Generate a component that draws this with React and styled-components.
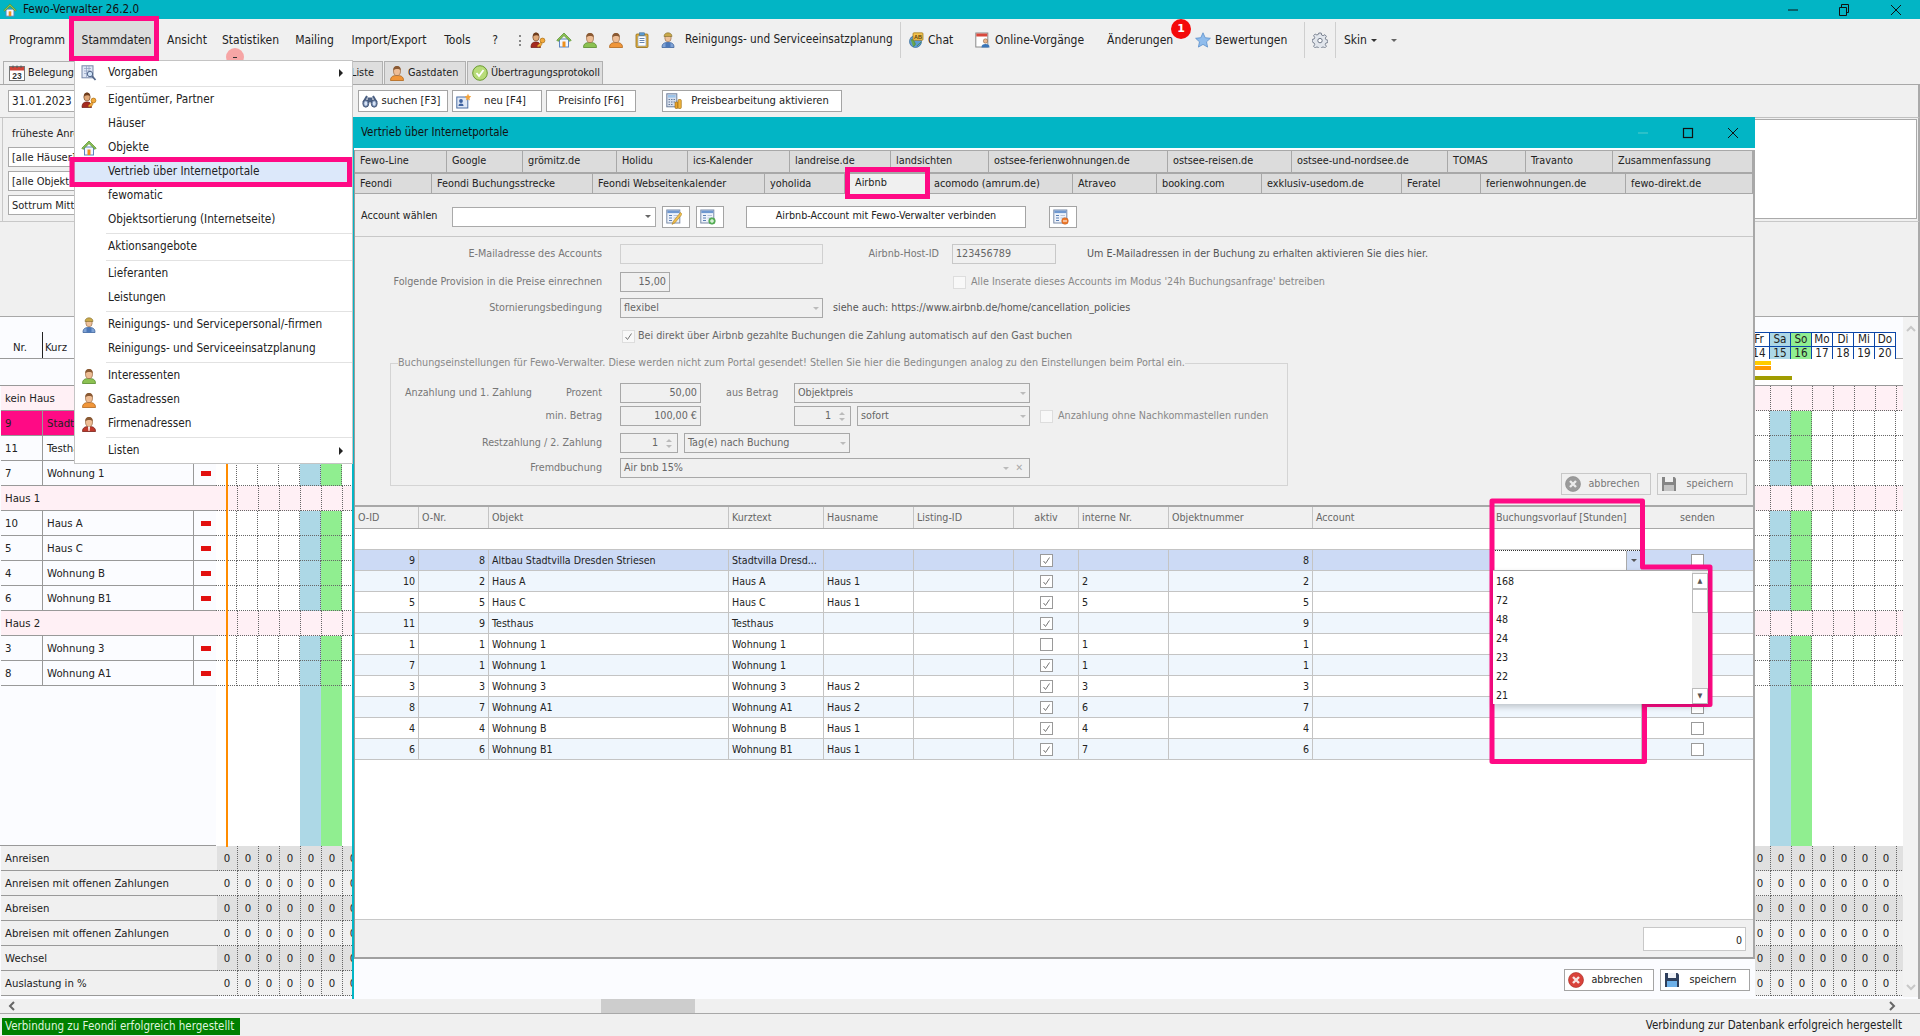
import React from 'react'
import styled, { createGlobalStyle } from 'styled-components'

const TEAL = '#02b5c5'
const PINK = '#ff0a85'
const FONT = `"DejaVu Sans Condensed", "Liberation Sans", sans-serif`

const Global = createGlobalStyle`
  html, body { margin: 0; padding: 0; width: 1920px; height: 1036px; overflow: hidden; background: #f0f0f0; }
  body { font: 12px/1 ${FONT}; color: #222; }
  * { box-sizing: border-box; }
`

const Shell = styled.div`
  position: relative;
  display: flex;
  flex-direction: column;
  width: 1920px;
  height: 1036px;
  overflow: hidden;
  background: #f0f0f0;
`

/* window chrome */

const TitleBar = styled.div`
  display: flex;
  align-items: center;
  height: 19px;
  flex: none;
  background: ${TEAL};
  color: #111;
  font-size: 11.6px;
  padding-left: 3px;
  gap: 6px;
`

const TitleText = styled.span`
  flex: 1;
  white-space: nowrap;
`

const WinButton = styled.span`
  display: flex;
  align-items: center;
  justify-content: center;
  width: ${p => p.$w || 45}px;
`

const MenuBar = styled.div`
  display: flex;
  align-items: stretch;
  height: 42px;
  flex: none;
`

const MenuEntry = styled.div`
  display: flex;
  align-items: center;
  justify-content: center;
  width: ${p => p.$w}px;
  background: ${p => (p.$open ? '#dcdcdc' : 'transparent')};
  white-space: nowrap;
`

const Grip = styled.span`
  align-self: center;
  width: 2px;
  height: 11px;
  margin: 0 4px 0 9px;
  border-left: 2px dotted #888;
`

const IconSlot = styled.span`
  display: flex;
  align-items: center;
  justify-content: center;
  width: ${p => p.$w || 26}px;
`

const ToolEntry = styled.div`
  position: relative;
  display: flex;
  align-items: center;
  gap: 4px;
  width: ${p => p.$w}px;
  padding-left: ${p => p.$pl || 0}px;
  font-size: ${p => p.$fs || 12}px;
  white-space: nowrap;
`

const BarSep = styled.span`
  align-self: center;
  width: 1px;
  height: 36px;
  background: #cfcfcf;
`

const Badge = styled.span`
  position: absolute;
  left: 82px;
  top: 0;
  width: 20px;
  height: 20px;
  border-radius: 50%;
  background: #f40a0a;
  color: #fff;
  font: bold 11px/20px "DejaVu Sans", sans-serif;
  text-align: center;
`

const FadedBadge = styled.span`
  position: absolute;
  left: 226px;
  top: 48px;
  width: 18px;
  height: 18px;
  border-radius: 50%;
  background: #f6a5a5;

  &::after {
    content: '';
    position: absolute;
    left: 7px;
    top: 9px;
    width: 4px;
    height: 1px;
    background: #333;
  }
`

const Caret = styled.span`
  display: inline-block;
  flex: none;
  width: 0;
  height: 0;
  margin-left: ${p => p.$ml || 0}px;
  border-left: 3px solid transparent;
  border-right: 3px solid transparent;
  border-top: 3px solid ${p => p.$c || '#666'};
`

const ModuleTabs = styled.div`
  display: flex;
  align-items: flex-end;
  height: 24px;
  flex: none;
  padding-left: 3px;
  font-size: 10.8px;
  border-bottom: 1px solid #a8a8a8;
`

const ModuleTab = styled.div`
  display: flex;
  align-items: center;
  gap: 3px;
  height: 23px;
  width: ${p => p.$w}px;
  margin-left: ${p => p.$ml || 0}px;
  padding-left: ${p => p.$pl || 4}px;
  background: ${p => (p.$on ? '#f0f0f0' : '#dedede')};
  border: 1px solid #b0b0b0;
  border-bottom: 0;
  white-space: nowrap;
`

const ToolRow = styled.div`
  display: flex;
  align-items: flex-start;
  height: 32px;
  flex: none;
  padding: 5px 0 0 8px;
  font-size: 11.1px;
  border-right: 2px solid #aaa;
`

const DateField = styled.div`
  width: 70px;
  height: 22px;
  padding: 5px 3px;
  background: #fff;
  border: 1px solid #aaa;
  font-size: 11.6px;
`

const Button = styled.div`
  display: flex;
  align-items: center;
  flex: none;
  width: ${p => p.$w}px;
  height: ${p => p.$h || 22}px;
  margin-left: ${p => p.$ml || 0}px;
  padding: 0 3px;
  background: ${p => (p.$off ? 'transparent' : '#fff')};
  border: 1px solid ${p => (p.$off ? '#c8c8c8' : '#a4a4a4')};
  color: ${p => (p.$off ? '#777' : '#222')};
  white-space: nowrap;
`

const ButtonText = styled.span`
  flex: 1;
  text-align: center;
`

const FilterArea = styled.div`
  display: flex;
  height: 105px;
  flex: none;
  font-size: 11px;
  border-top: 1px solid #c0c0c0;
  border-bottom: 1px solid #c8c8c8;
  border-right: 2px solid #aaa;
  padding-left: 2px;
`

const FilterPanel = styled.div`
  width: 360px;
  flex: none;
  padding: 10px 0 0 5px;
  border-left: 1px solid #c8c8c8;
`

const FilterLabel = styled.div`
  height: 19px;
  padding-left: 4px;
`

const FilterBox = styled.div`
  width: 160px;
  height: 20px;
  margin-bottom: 4px;
  padding: 4px 3px;
  background: #fff;
  border: 1px solid #aaa;
  white-space: nowrap;
`

const NotesBox = styled.div`
  flex: 1;
  margin: 1px 1px 2px 0;
  background: #fff;
  border: 1px solid #aaa;
`

const GapArea = styled.div`
  height: 94px;
  flex: none;
  border-right: 2px solid #aaa;
`

/* planner */

const Planner = styled.div`
  position: relative;
  display: flex;
  height: 683px;
  flex: none;
  font-size: 11.3px;
  border-top: 1px solid #a8a8a8;
  border-right: 2px solid #aaa;
  background: #fbfcff;
`

const PlannerMain = styled.div`
  display: flex;
  flex-direction: column;
  width: 1903px;
  flex: none;
  overflow: hidden;
`

const VScroll = styled.div`
  flex: 1;
  display: flex;
  flex-direction: column;
  justify-content: space-between;
  align-items: center;
  height: 680px;
  padding: 6px 0 4px;
  background: #f2f2f2;
`

const HeadRow = styled.div`
  display: flex;
  height: 42px;
  flex: none;
  border-bottom: 1px solid #999;
`

const HeadLeft = styled.div`
  display: flex;
  align-items: flex-end;
  width: 216px;
  flex: none;
  padding-left: 1px;
`

const HeadCell = styled.div`
  width: ${p => p.$w}px;
  height: 26px;
  padding: 10px 0 0 ${p => p.$pl || 0}px;
  border-right: ${p => (p.$line ? '1px solid #222' : 'none')};
`

const HeadDays = styled.div`
  display: flex;
  flex: none;
  padding-top: 15px;
`

const HeadDay = styled.div`
  width: 21px;
  height: 27px;
  flex: none;
  font-size: 11.6px;
  text-align: center;
  border-right: 1px solid #0b46a8;
  border-top: 1px solid #0b46a8;
`

const DayName = styled.div`
  height: 14px;
  padding-top: 1px;
  background: ${p => p.$bg};
  border-bottom: 1px solid #0b46a8;
`

const DayNum = styled.div`
  height: 12px;
  line-height: 12px;
  background: ${p => p.$bg};
`

const Row = styled.div`
  display: flex;
  height: ${p => p.$h || 25}px;
  flex: none;
`

const Nr = styled.div`
  width: 42px;
  flex: none;
  margin-left: 1px;
  padding: 7px 0 0 4px;
  background: ${p => (p.$hot ? PINK : 'transparent')};
  border-bottom: 1px solid #999;
  border-right: 1px solid #999;
`

const Kurz = styled.div`
  width: 151px;
  flex: none;
  padding: 7px 0 0 4px;
  background: ${p => (p.$hot ? PINK : 'transparent')};
  border-bottom: 1px solid #999;
  border-right: 1px solid #999;
  white-space: nowrap;
  overflow: hidden;
`

const MarkCell = styled.div`
  display: flex;
  align-items: center;
  justify-content: center;
  width: 22px;
  flex: none;
  padding-left: 1px;
  border-bottom: 1px solid #999;
`

const Mark = styled.span`
  width: 10px;
  height: 5px;
  background: #e21010;
`

const GroupCell = styled.div`
  width: 216px;
  flex: none;
  margin-left: 1px;
  padding: 7px 0 0 4px;
  background: #fff0f5;
  border-bottom: 1px solid #999;
`

const Days = styled.div`
  display: flex;
  flex: none;
`

const Day = styled.div`
  width: 21px;
  flex: none;
  padding-top: 7px;
  text-align: center;
  background: ${p => p.$bg};
  border-right: ${p => (p.$plain ? 'none' : '1px dotted #666')};
  border-bottom: ${p => (p.$plain ? 'none' : '1px dotted #666')};
`

const BarsRow = styled.div`
  position: relative;
  height: 27px;
  flex: none;
  background: #fff;
  border-bottom: 1px solid #999;
`

const BarsLeft = styled.div`
  position: absolute;
  left: 0;
  top: 0;
  bottom: 0;
  width: 216px;
  background: #fbfcff;
`

const CalBar = styled.div`
  position: absolute;
  left: ${p => p.$l}px;
  top: ${p => p.$t}px;
  width: ${p => p.$w}px;
  height: 4px;
  background: ${p => p.$c};
`

const EmptyLeft = styled.div`
  width: 216px;
  flex: none;
  border-bottom: 1px solid #999;
`

const StatLabel = styled.div`
  width: 216px;
  flex: none;
  margin-left: 1px;
  padding: 7px 0 0 4px;
  background: #f0f0f0;
  border-bottom: 1px solid #999;
  white-space: nowrap;
`

const TodayLine = styled.div`
  position: absolute;
  left: 226px;
  top: 42px;
  height: 488px;
  width: 2px;
  background: #ff8c00;
`

const HScroll = styled.div`
  position: relative;
  display: flex;
  align-items: center;
  justify-content: space-between;
  height: 14px;
  flex: none;
  padding: 0 22px 0 6px;
  background: #f0f0f0;
`

const HThumb = styled.div`
  position: absolute;
  left: 601px;
  top: 0;
  width: 94px;
  height: 14px;
  background: #cdcdcd;
`

const StatusBar = styled.div`
  display: flex;
  align-items: center;
  justify-content: space-between;
  flex: 1;
  padding: 2px 18px 0 2px;
  font-size: 11.5px;
  border-top: 1px solid #a8a8a8;
`

const StatusOk = styled.div`
  width: 238px;
  height: 17px;
  padding: 3px 3px;
  background: #008000;
  color: #dff5df;
  white-space: nowrap;
`

/* the dialog */

const Dialog = styled.section`
  position: absolute;
  left: 352px;
  top: 117px;
  display: flex;
  flex-direction: column;
  width: 1403px;
  height: 882px;
  font-size: 10.7px;
  background: #fbfcff;
`

const DialogTitle = styled.div`
  display: flex;
  align-items: center;
  height: 31px;
  flex: none;
  padding-left: 9px;
  background: ${TEAL};
  color: #111;
  font-size: 11.4px;
`

const DialogBody = styled.div`
  display: flex;
  flex-direction: column;
  flex: 1;
  padding-top: 2px;
  border-left: 2px solid ${TEAL};
`

const Inner = styled.div`
  display: flex;
  flex-direction: column;
  width: 1401px;
  height: 809px;
  flex: none;
  background: #f0f0f0;
  border-left: 1px solid #999;
  border-right: 2px solid #a8a8a8;
  border-bottom: 2px solid #a0a0a0;
`

const TabRow = styled.div`
  display: flex;
  height: ${p => p.$h}px;
  flex: none;
  font-size: 10.8px;
`

const Tab = styled.div`
  width: ${p => p.$w}px;
  flex: none;
  padding: ${p => (p.$on ? '4px 0 0 10px' : '5px 0 0 5px')};
  background: ${p => (p.$on ? '#f0f0f0' : '#dcdcdc')};
  border: 1px solid #a8a8a8;
  border-width: 1px 1px ${p => (p.$on ? 0 : 1)}px 0;
  white-space: nowrap;
`

const AccountRow = styled.div`
  display: flex;
  align-items: center;
  height: 43px;
  flex: none;
  padding: 3px 0 0 6px;
  border-bottom: 1px solid #c8c8c8;
`

const AccountLabel = styled.span`
  width: 91px;
  flex: none;
  white-space: nowrap;
`

const WhiteField = styled.div`
  display: flex;
  align-items: center;
  justify-content: flex-end;
  width: 204px;
  height: 20px;
  flex: none;
  padding: 0 4px;
  background: #fff;
  border: 1px solid #aaa;
`

const Settings = styled.div`
  display: flex;
  flex-direction: column;
  flex: none;
  height: 268px;
  padding-top: 7px;
  color: #777;
`

const SetRow = styled.div`
  display: flex;
  align-items: center;
  height: 20px;
  flex: none;
  margin-top: ${p => p.$mt || 0}px;
`

const Label = styled.span`
  width: ${p => p.$w}px;
  flex: none;
  margin-left: ${p => p.$ml || 0}px;
  text-align: ${p => p.$align || 'right'};
  color: ${p => p.$c || 'inherit'};
  white-space: nowrap;
`

const Field = styled.div`
  display: flex;
  align-items: center;
  justify-content: ${p => (p.$right ? 'flex-end' : 'space-between')};
  gap: 4px;
  width: ${p => p.$w}px;
  height: 20px;
  flex: none;
  margin-left: ${p => p.$ml ?? 18}px;
  padding: 0 3px;
  border: 1px solid ${p => p.$b || '#a8a8a8'};
  color: #666;
  white-space: nowrap;
`

const SpinArrows = styled.span`
  display: flex;
  flex-direction: column;
  gap: 3px;
  margin: 0 2px 0 4px;
`

const UpTick = styled.span`
  width: 0;
  height: 0;
  border-left: 3px solid transparent;
  border-right: 3px solid transparent;
  border-bottom: 3px solid #bbb;
`

const ClearX = styled.span`
  color: #aaa;
  font-size: 10px;
  margin-left: 6px;
`

const EndGroup = styled.span`
  display: flex;
  align-items: center;
  padding-right: 3px;
`

const Check = styled.span`
  display: flex;
  align-items: center;
  justify-content: center;
  width: 13px;
  height: 13px;
  flex: none;
  margin-left: ${p => p.$ml || 0}px;
  background: ${p => (p.$faint ? '#f8f8f8' : '#fff')};
  border: 1px solid ${p => (p.$faint ? '#ddd' : '#9a9a9a')};
`

const SettingsBottom = styled.div`
  display: flex;
  align-items: flex-end;
  flex: 1;
  padding: 0 6px 10px 0;
`

const GroupBox = styled.fieldset`
  width: 898px;
  flex: none;
  margin: 0 0 9px 35px;
  padding: 0 0 7px;
  border: 1px solid #d4d4d4;
  min-inline-size: 0;
`

const GroupLegend = styled.legend`
  margin-left: 7px;
  padding: 0;
  height: 14px;
  line-height: 14px;
  color: #888;
  white-space: nowrap;
`

const SaveGroup = styled.div`
  display: flex;
  gap: 6px;
  margin-left: auto;
`

const Table = styled.div`
  display: flex;
  flex-direction: column;
  flex: 1;
  font-size: 10.6px;
  background: #fff;
  border-top: 2px solid #a8a8a8;
`

const TableHead = styled.div`
  display: flex;
  height: 22px;
  flex: none;
  background: #f0f0f0;
  border-bottom: 1px solid #a8a8a8;
  color: #666;
`

const TableRow = styled.div`
  display: flex;
  height: 21px;
  flex: none;
  background: ${p => p.$bg};
  border-bottom: 1px solid #c4c4c4;
`

const Cell = styled.div`
  position: relative;
  display: flex;
  align-items: center;
  justify-content: ${p => ({ right: 'flex-end', center: 'center' }[p.$align] || 'flex-start')};
  width: ${p => p.$w}px;
  flex: none;
  padding: 0 3px;
  border-right: ${p => (p.$last ? 'none' : '1px solid #c4c4c4')};
  white-space: nowrap;
`

const ComboCell = styled(Cell)`
  justify-content: flex-end;
  padding: 0;
  background: #fff;
  border-top: 1px dotted #333;
`

const ComboArrow = styled.span`
  display: flex;
  align-items: center;
  justify-content: center;
  width: 15px;
  height: 100%;
  background: #cddbf4;
  border-left: 1px solid #aaa;
`

const DropList = styled.div`
  position: absolute;
  left: 0;
  top: 19px;
  display: flex;
  width: 215px;
  height: 134px;
  z-index: 3;
  background: #fff;
  border-top: 1px solid #aaa;
  box-shadow: 0 3px 6px #0003;
`

const DropItems = styled.div`
  flex: 1;
  padding: 1px 0 0 3px;
`

const DropItem = styled.div`
  height: 19px;
  line-height: 19px;
`

const DropScroll = styled.div`
  display: flex;
  flex-direction: column;
  width: 16px;
  flex: none;
  padding-top: 2px;
  background: #efefef;
`

const ScrollBtn = styled.div`
  display: flex;
  align-items: center;
  justify-content: center;
  height: 16px;
  flex: none;
  background: #fff;
  border: 1px solid #bbb;
  color: #555;
  font-size: 7px;
`

const ScrollThumb = styled.div`
  height: 24px;
  flex: none;
  background: #fff;
  border: 1px solid #bbb;
  margin-bottom: auto;
`

const TableFill = styled.div`
  flex: 1;
`

const TableFoot = styled.div`
  display: flex;
  align-items: center;
  justify-content: flex-end;
  height: 38px;
  flex: none;
  padding-right: 7px;
  background: #f0f0f0;
  border-top: 1px solid #c8c8c8;
`

const SumBox = styled.div`
  width: 103px;
  height: 24px;
  padding: 7px 3px 0 0;
  text-align: right;
  background: #fff;
  border: 1px solid #c8c8c8;
`

const DialogFoot = styled.div`
  display: flex;
  align-items: center;
  justify-content: flex-end;
  gap: 6px;
  flex: 1;
  padding: 2px 5px 0 0;
`

/* dropdown menu */

const Menu = styled.nav`
  position: absolute;
  left: 74px;
  top: 60px;
  width: 279px;
  height: 404px;
  font-size: 11.7px;
  background: #fff;
  border: 1px solid #c4c4c4;
`

const MenuItem = styled.div`
  display: flex;
  align-items: center;
  height: 24px;
  padding-left: 5px;
  background: ${p => (p.$on ? '#dce8fa' : 'transparent')};
  white-space: nowrap;
`

const MenuIcon = styled.span`
  display: flex;
  justify-content: center;
  width: 17px;
  flex: none;
  margin-right: 11px;
`

const MenuText = styled.span`
  flex: 1;
`

const SubArrow = styled.span`
  width: 0;
  height: 0;
  margin-right: 9px;
  border-top: 4px solid transparent;
  border-bottom: 4px solid transparent;
  border-left: 4px solid #222;
`

const MenuSep = styled.div`
  height: 3px;
  margin-left: 31px;
  border-top: 1px solid #e2e2e2;
  transform: translateY(1px);
`

const Marks = styled.svg`
  position: absolute;
  left: 0;
  top: 0;
  width: 1920px;
  height: 1036px;
  pointer-events: none;
`

/* icons */

const Svg = styled.svg`
  display: block;
  flex: none;
  width: ${p => p.$s || 16}px;
  height: ${p => p.$s || 16}px;
  filter: ${p => (p.$off ? 'grayscale(1) opacity(.6)' : 'none')};
`

const House = ({ s }) => (
  <Svg viewBox="0 0 16 16" $s={s}>
    <rect x="3.5" y="7" width="9" height="8" fill="#f2f6ff" stroke="#5b84c0" />
    <rect x="6.5" y="9.5" width="3" height="5.5" fill="#ee8f1d" />
    <path d="M8 1L.8 8.2 2 9.4 8 3.6l6 5.8 1.2-1.2z" fill="#8cc152" stroke="#4f8a2b" strokeWidth=".7" />
  </Svg>
)

const Person = ({ shirt, dark, tie }) => (
  <Svg viewBox="0 0 16 16">
    <path d="M1.5 15.5c0-4 2.5-5 6.5-5s6.5 1 6.5 5z" fill={shirt} stroke={dark} strokeWidth=".8" />
    <ellipse cx="8" cy="6" rx="3.5" ry="4.6" fill="#eebd95" stroke="#9a6a44" strokeWidth=".7" />
    <path d="M4.5 5.5C4 2 6 1 8 1s4 1 3.5 4.5C10.5 3.6 6 3.6 4.5 5.5z" fill="#8a5a34" />
    {tie && <path d="M7 10.6h2L8.5 15h-1z" fill="#fff" />}
  </Svg>
)

const Owner = () => (
  <Svg viewBox="0 0 16 16">
    <path d="M1 15.5c0-4 1.5-5.5 5-5.5s4.5 2 4.500 5.500z" fill="#a52a20" stroke="#6a1a12" strokeWidth=".7" />
    <ellipse cx="6" cy="5" rx="3.2" ry="4" fill="#e0a878" stroke="#7a4c2c" strokeWidth=".7" />
    <path d="M3 4.500C3 1.500 4.500.6 6 .6s3 1 3 3.400C7.500 3 5 3 3 4.500z" fill="#6e3d1e" />
    <circle cx="12.500" cy="8.500" r="2.400" fill="#f2a93a" stroke="#a96c10" strokeWidth=".7" />
    <path d="M11 10l-4 4 1.200 1.200 1-1 .9.8 2-3z" fill="#f2a93a" stroke="#a96c10" strokeWidth=".5" />
  </Svg>
)

const Cleaner = () => (
  <Svg viewBox="0 0 16 16">
    <path d="M2 15.500c0-4 2-5 6-5s6 1 6 5z" fill="#7fa3d6" stroke="#3f659c" strokeWidth=".8" />
    <rect x="5.500" y="10.500" width="5" height="5" fill="#4c78b8" />
    <ellipse cx="8" cy="6" rx="3.200" ry="3.800" fill="#eec29c" stroke="#8a6444" strokeWidth=".6" />
    <path d="M4 4.500C4 2 6 .8 8 .8s4 1.200 4 3.700z" fill="#c9a94a" stroke="#80692a" strokeWidth=".6" />
  </Svg>
)

const Clipboard = () => (
  <Svg viewBox="0 0 16 16">
    <rect x="2" y="2" width="12" height="13.500" rx="1" fill="#e8b23c" stroke="#8f6a16" strokeWidth=".8" />
    <rect x="4" y="4" width="8" height="10" fill="#fff" stroke="#6f8fb8" strokeWidth=".6" />
    <path d="M5.500 6.500h5M5.500 8.500h5M5.500 10.500h5" stroke="#5577a8" strokeWidth=".9" />
    <rect x="5.500" y=".8" width="5" height="2.600" fill="#5b9ad0" stroke="#36648f" strokeWidth=".5" />
  </Svg>
)

const Calendar = ({ text }) => (
  <Svg viewBox="0 0 16 16">
    <rect x=".5" y="1.500" width="15" height="14" fill="#fff" stroke="#777" />
    <rect x="1" y="2" width="14" height="3.500" fill="#d04438" />
    <path d="M4 .5v2.500M8 .5v2.500M12 .5v2.500" stroke="#555" />
    <text x="8" y="13.800" fontSize="8.500" fontWeight="bold" textAnchor="middle" fontFamily="Liberation Sans" fill="#333">{text}</text>
  </Svg>
)

const Binoculars = () => (
  <Svg viewBox="0 0 16 16">
    <path d="M5 3L1.200 9.500M11 3l3.800 6.500M6.500 5.500h3v3h-3z" stroke="#4a5f82" strokeWidth="2" fill="#5d7196" />
    <ellipse cx="3.800" cy="10.500" rx="3" ry="3.700" fill="#6d84ab" stroke="#3d4e6c" strokeWidth=".8" />
    <ellipse cx="12.200" cy="10.500" rx="3" ry="3.700" fill="#6d84ab" stroke="#3d4e6c" strokeWidth=".8" />
    <ellipse cx="3.800" cy="10.500" rx="1.500" ry="2.200" fill="#d6e2f4" />
    <ellipse cx="12.200" cy="10.500" rx="1.500" ry="2.200" fill="#d6e2f4" />
  </Svg>
)

const NewCard = () => (
  <Svg viewBox="0 0 16 16">
    <rect x=".8" y="4" width="11" height="11" fill="#dfe8f6" stroke="#4d6fa3" />
    <circle cx="5" cy="8" r="1.900" fill="#3e62a0" />
    <path d="M2.500 13c0-2 1-2.600 2.500-2.600S7.500 11 7.500 13z" fill="#3e62a0" />
    <path d="M12 .5l.9 2.300 2.300.5-1.700 1.700.3 2.400-1.800-1.200-2 1.200.4-2.400L8.700 3.300l2.400-.5z" fill="#f2a23a" />
  </Svg>
)

const Calc = () => (
  <Svg viewBox="0 0 16 16">
    <rect x=".8" y=".8" width="10" height="13" fill="#d7dfec" stroke="#6d7f9c" />
    <rect x="2" y="2" width="7.600" height="2.600" fill="#9cc4ea" />
    <path d="M2.500 6.500h1.500M5 6.500h1.500M7.500 6.500H9M2.500 9h1.500M5 9h1.500M7.500 9H9M2.500 11.500h1.500M5 11.500h1.500" stroke="#667a9a" strokeWidth="1.200" />
    <rect x="9" y="9" width="3" height="6.500" rx="1" fill="#e8a12a" stroke="#94640e" strokeWidth=".6" />
    <rect x="12" y="6.500" width="3.300" height="9" rx="1" fill="#f0b33c" stroke="#94640e" strokeWidth=".6" />
  </Svg>
)

const ChatGlobe = () => (
  <Svg viewBox="0 0 16 16">
    <circle cx="7.500" cy="9.500" r="6" fill="#5b9bd5" stroke="#2e6596" strokeWidth=".7" />
    <path d="M3 8c2-1 3 1 4 3s-1 3-2 3.500M9 14c1-2 3-2 4-4" fill="#6aa84f" stroke="#4d8a38" strokeWidth=".8" />
    <rect x="5" y=".8" width="10" height="7.500" rx="1" fill="#f2c14e" stroke="#9a7316" strokeWidth=".7" />
    <text x="10" y="6.600" fontSize="5.500" fontWeight="bold" textAnchor="middle" fontFamily="Liberation Sans" fill="#5a3d08">AB</text>
  </Svg>
)

const OnlineCal = () => (
  <Svg viewBox="0 0 16 16">
    <rect x=".8" y="1" width="12" height="14" fill="#fff" stroke="#8a8a8a" />
    <rect x="1.300" y="1.500" width="11" height="3" fill="#d8483c" />
    <circle cx="10.500" cy="9" r="2.200" fill="#e8b48c" stroke="#7a5434" strokeWidth=".5" />
    <path d="M6.500 15.500c0-2.700 1.500-3.500 4-3.500s4 .8 4 3.500z" fill="#3b76b8" />
  </Svg>
)

const StarIcon = () => (
  <Svg viewBox="0 0 16 16">
    <path d="M8 .8l2.200 4.900 5.200.6-3.900 3.500 1.100 5.300L8 12.400l-4.600 2.700 1.100-5.300L.6 6.300l5.200-.6z" fill="#8fbcec" stroke="#5a8fca" strokeWidth=".8" />
  </Svg>
)

const Gear = () => (
  <Svg viewBox="0 0 16 16">
    <path d="M6.800 1h2.400l.4 2 1.500.7 1.800-1 1.500 1.700-1.100 1.700.6 1.600 1.900.5v2.300l-1.900.5-.6 1.600 1.100 1.700-1.600 1.600-1.700-1-1.500.6-.4 2H6.800l-.4-2-1.500-.6-1.700 1-1.600-1.600 1.100-1.700-.6-1.600L.2 9.800V7.500l1.900-.5.600-1.600-1.100-1.700 1.600-1.700 1.700 1 1.500-.7z" fill="#e2e6ec" stroke="#6f7888" strokeWidth=".9" />
    <circle cx="8" cy="8.600" r="2.200" fill="#fff" stroke="#6f7888" />
  </Svg>
)

const Lookup = () => (
  <Svg viewBox="0 0 16 16">
    <rect x="1" y=".8" width="11" height="12" fill="#dfe7f5" stroke="#7687a8" />
    <path d="M3 3.500h7M3 6h7M3 8.500h4M5.500 1v11M8 1v6" stroke="#8b9bbd" strokeWidth=".7" />
    <circle cx="9" cy="9" r="2.700" fill="#cfe2f7" stroke="#54678a" />
    <path d="M11 11l3.500 4" stroke="#54678a" strokeWidth="1.800" />
  </Svg>
)

const Form = ({ kind }) => (
  <Svg viewBox="0 0 16 16">
    <rect x=".8" y="1" width="13" height="13" fill="#eef3fb" stroke="#7a8ba8" />
    <rect x="1.300" y="1.500" width="12" height="2.600" fill="#6f98d0" />
    <path d="M3 6.500h3M3 9h3M3 11.500h3" stroke="#5a7fb5" />
    <path d="M7.500 6.500h4.500M7.500 9h4.500" stroke="#b8c4d8" />
    {kind === 'edit' && <path d="M14.500 3.500l-7 8.500-1.500 3.400 3-1.600 7-8.500z" fill="#f2c14e" stroke="#a87a1c" strokeWidth=".6" />}
    {kind === 'add' && <circle cx="12" cy="12" r="3.300" fill="#5cb85c" stroke="#3a8a3a" strokeWidth=".5" />}
    {kind === 'add' && <path d="M12 10v4M10 12h4" stroke="#fff" />}
    {kind === 'del' && <circle cx="12" cy="12" r="3.300" fill="#ef7a2a" stroke="#b8541a" strokeWidth=".5" />}
    {kind === 'del' && <path d="M10 12h4" stroke="#fff" />}
  </Svg>
)

const CancelIcon = ({ off }) => (
  <Svg viewBox="0 0 16 16" $off={off}>
    <circle cx="8" cy="8" r="7.500" fill="#d9423a" stroke="#a52820" strokeWidth=".6" />
    <path d="M5 5l6 6M11 5l-6 6" stroke="#f8e4e2" strokeWidth="2.400" />
  </Svg>
)

const SaveIcon = ({ off }) => (
  <Svg viewBox="0 0 16 16" $off={off}>
    <path d="M1 1h12.500L15 2.500V15H1z" fill="#2e3f5c" />
    <rect x="4" y="1" width="8" height="5" fill="#eef1f6" />
    <rect x="3" y="9" width="10" height="6" fill="#6db0e8" />
  </Svg>
)

const OkCircle = () => (
  <Svg viewBox="0 0 16 16">
    <circle cx="8" cy="8" r="7.300" fill="#b8dc7a" stroke="#6a9a30" />
    <path d="M4.500 8l2.500 3 4.500-6" fill="none" stroke="#fff" strokeWidth="1.800" />
  </Svg>
)

const Tick = () => (
  <svg width="9" height="9" viewBox="0 0 9 9">
    <path d="M1.500 5l2 2.500L7.500 1.500" fill="none" stroke="#777" strokeWidth="1" />
  </svg>
)

const Chevron = ({ dir, c = '#c8c8c8' }) => {
  const d = { up: 'M2 8l4-4 4 4', down: 'M2 4l4 4 4-4', left: 'M8 2L4 6l4 4', right: 'M4 2l4 4-4 4' }[dir]
  return (
    <svg width="12" height="12" viewBox="0 0 12 12" fill="none" stroke={c} strokeWidth="2">
      <path d={d} />
    </svg>
  )
}

const WinGlyph = ({ kind, c = '#111' }) => (
  <svg width="14" height="14" viewBox="0 0 14 14" fill="none" stroke={c}>
    {kind === 'min' && <path d="M2 7h10" />}
    {kind === 'max' && <rect x="2.500" y="2.500" width="9" height="9" strokeWidth="1.200" />}
    {kind === 'restore' && <path d="M2.500 4.500h7v8h-7zM4.500 4.500v-3h7v8h-2" />}
    {kind === 'close' && <path d="M2 2l10 10M12 2L2 12" />}
  </svg>
)

/* data */

const topTabs = [
  ['Fewo-Line', 92], ['Google', 76], ['grömitz.de', 94], ['Holidu', 71], ['ics-Kalender', 102],
  ['landreise.de', 101], ['landsichten', 98], ['ostsee-ferienwohnungen.de', 179], ['ostsee-reisen.de', 124],
  ['ostsee-und-nordsee.de', 156], ['TOMAS', 78], ['Travanto', 87], ['Zusammenfassung', 140],
]

const lowTabs = [
  ['Feondi', 77], ['Feondi Buchungsstrecke', 161], ['Feondi Webseitenkalender', 172], ['yoholida', 80],
  ['Airbnb', 84, true], ['acomodo (amrum.de)', 144], ['Atraveo', 84], ['booking.com', 105],
  ['exklusiv-usedom.de', 140], ['Feratel', 79], ['ferienwohnungen.de', 145], ['fewo-direkt.de', 127],
]

const COLS = [64, 70, 240, 95, 90, 100, 65, 90, 144, 180, 149, 111]

const HEAD = [
  ['O-ID'], ['O-Nr.'], ['Objekt'], ['Kurztext'], ['Hausname'], ['Listing-ID'], ['aktiv', 'center'],
  ['interne Nr.'], ['Objektnummer'], ['Account'], ['Buchungsvorlauf [Stunden]'], ['senden', 'center'],
]

const objects = [
  [9, 8, 'Altbau Stadtvilla Dresden Striesen', 'Stadtvilla Dresd...', '', true, '', 8],
  [10, 2, 'Haus A', 'Haus A', 'Haus 1', true, 2, 2],
  [5, 5, 'Haus C', 'Haus C', 'Haus 1', true, 5, 5],
  [11, 9, 'Testhaus', 'Testhaus', '', true, '', 9],
  [1, 1, 'Wohnung 1', 'Wohnung 1', '', false, 1, 1],
  [7, 1, 'Wohnung 1', 'Wohnung 1', '', true, 1, 1],
  [3, 3, 'Wohnung 3', 'Wohnung 3', 'Haus 2', true, 3, 3],
  [8, 7, 'Wohnung A1', 'Wohnung A1', 'Haus 2', true, 6, 7],
  [4, 4, 'Wohnung B', 'Wohnung B', 'Haus 1', true, 4, 4],
  [6, 6, 'Wohnung B1', 'Wohnung B1', 'Haus 1', true, 7, 6],
]

const plannerRows = [
  { group: 'kein Haus' },
  { nr: 9, name: 'Stadtvilla Dresden', hot: true },
  { nr: 11, name: 'Testhaus' },
  { nr: 7, name: 'Wohnung 1' },
  { group: 'Haus 1' },
  { nr: 10, name: 'Haus A' },
  { nr: 5, name: 'Haus C' },
  { nr: 4, name: 'Wohnung B' },
  { nr: 6, name: 'Wohnung B1' },
  { group: 'Haus 2' },
  { nr: 3, name: 'Wohnung 3' },
  { nr: 8, name: 'Wohnung A1' },
]

const stats = ['Anreisen', 'Anreisen mit offenen Zahlungen', 'Abreisen', 'Abreisen mit offenen Zahlungen', 'Wechsel', 'Auslastung in %']

const menuEntries = [
  { t: 'Vorgaben', i: <Lookup />, sub: true }, 'sep',
  { t: 'Eigentümer, Partner', i: <Owner /> },
  { t: 'Häuser' },
  { t: 'Objekte', i: <House /> },
  { t: 'Vertrieb über Internetportale', on: true },
  { t: 'fewomatic' },
  { t: 'Objektsortierung (Internetseite)' }, 'sep',
  { t: 'Aktionsangebote' }, 'sep',
  { t: 'Lieferanten' },
  { t: 'Leistungen' }, 'sep',
  { t: 'Reinigungs- und Servicepersonal/-firmen', i: <Cleaner /> },
  { t: 'Reinigungs- und Serviceeinsatzplanung' }, 'sep',
  { t: 'Interessenten', i: <Person shirt="#8cc152" dark="#558a2a" /> },
  { t: 'Gastadressen', i: <Person shirt="#f0963a" dark="#b0661a" /> },
  { t: 'Firmenadressen', i: <Person shirt="#c0392b" dark="#7a2018" tie /> }, 'sep',
  { t: 'Listen', sub: true },
]

const DAY_COUNT = 81
const dayNames = ['So', 'Mo', 'Di', 'Mi', 'Do', 'Fr', 'Sa']
const days = Array.from({ length: DAY_COUNT }, (_, i) => {
  const d = new Date(2023, 0, 31 + i)
  return { name: dayNames[d.getDay()], num: d.getDate(), wd: d.getDay() }
})

const weekendBg = (wd, base) => (wd === 6 ? '#add8e6' : wd === 0 ? '#90ee90' : base)

function DayStrip({ group, plain, zero, row = 0 }) {
  return (
    <Days>
      {days.map((d, i) => {
        let bg = weekendBg(d.wd, '#fff')
        if (group) bg = '#fff0f5'
        if (zero) bg = row % 2 ? '#f0f0f0' : '#e0e0e0'
        return (
          <Day key={i} $bg={bg} $plain={plain}>
            {zero ? '0' : null}
          </Day>
        )
      })}
    </Days>
  )
}

function App() {
  return (
    <Shell>
      <Global />
      <TitleBar>
        <House s={14} />
        <TitleText>Fewo-Verwalter 26.2.0</TitleText>
        <WinButton><WinGlyph kind="min" /></WinButton>
        <WinButton><WinGlyph kind="restore" /></WinButton>
        <WinButton $w={48}><WinGlyph kind="close" /></WinButton>
      </TitleBar>

      <MenuBar>
        <MenuEntry $w={74}>Programm</MenuEntry>
        <MenuEntry $w={85} $open>Stammdaten</MenuEntry>
        <MenuEntry $w={56}>Ansicht</MenuEntry>
        <MenuEntry $w={71}>Statistiken</MenuEntry>
        <MenuEntry $w={57}>Mailing</MenuEntry>
        <MenuEntry $w={92}>Import/Export</MenuEntry>
        <MenuEntry $w={45}>Tools</MenuEntry>
        <MenuEntry $w={30}>?</MenuEntry>
        <Grip />
        <IconSlot><Owner /></IconSlot>
        <IconSlot><House /></IconSlot>
        <IconSlot><Person shirt="#8cc152" dark="#558a2a" /></IconSlot>
        <IconSlot><Person shirt="#f0963a" dark="#b0661a" /></IconSlot>
        <IconSlot><Clipboard /></IconSlot>
        <IconSlot><Cleaner /></IconSlot>
        <ToolEntry $w={219} $pl={4} $fs={11.7}>Reinigungs- und Serviceeinsatzplanung</ToolEntry>
        <BarSep />
        <ToolEntry $w={68} $pl={7}><ChatGlobe />Chat</ToolEntry>
        <ToolEntry $w={120} $pl={6}><OnlineCal />Online-Vorgänge</ToolEntry>
        <ToolEntry $w={105} $pl={18}>Änderungen<Badge>1</Badge></ToolEntry>
        <ToolEntry $w={110} $pl={1}><StarIcon />Bewertungen</ToolEntry>
        <BarSep />
        <IconSlot $w={30}><Gear /></IconSlot>
        <BarSep />
        <ToolEntry $w={60} $pl={8}>Skin<Caret $c="#333" /><Caret $ml={10} /></ToolEntry>
      </MenuBar>
      <FadedBadge />

      <ModuleTabs>
        <ModuleTab $w={72} $pl={5} $on><Calendar text="23" />Belegung</ModuleTab>
        <ModuleTab $w={36} $ml={272} $pl={3}>Liste</ModuleTab>
        <ModuleTab $w={82} $ml={1}><Person shirt="#f0963a" dark="#b0661a" />Gastdaten</ModuleTab>
        <ModuleTab $w={136} $ml={1}><OkCircle />Übertragungsprotokoll</ModuleTab>
      </ModuleTabs>

      <ToolRow>
        <DateField>31.01.2023</DateField>
        <Button $w={90} $ml={280}><Binoculars /><ButtonText>suchen [F3]</ButtonText></Button>
        <Button $w={90} $ml={4}><NewCard /><ButtonText>neu [F4]</ButtonText></Button>
        <Button $w={90} $ml={4}><ButtonText>Preisinfo [F6]</ButtonText></Button>
        <Button $w={180} $ml={26}><Calc /><ButtonText>Preisbearbeitung aktivieren</ButtonText></Button>
      </ToolRow>

      <FilterArea>
        <FilterPanel>
          <FilterLabel>früheste Anreise</FilterLabel>
          <FilterBox>[alle Häuser]</FilterBox>
          <FilterBox>[alle Objekte]</FilterBox>
          <FilterBox>Sottrum Mitte</FilterBox>
        </FilterPanel>
        <NotesBox />
      </FilterArea>
      <GapArea />

      <Planner>
        <PlannerMain>
          <HeadRow>
            <HeadLeft>
              <HeadCell $w={42} $pl={12} $line>Nr.</HeadCell>
              <HeadCell $w={151} $pl={2}>Kurz</HeadCell>
            </HeadLeft>
            <HeadDays>
              {days.slice(0, 80).map((d, i) => (
                <HeadDay key={i}>
                  <DayName $bg={weekendBg(d.wd, '#fff')}>{d.name}</DayName>
                  <DayNum $bg={weekendBg(d.wd, '#fff')}>{d.num}</DayNum>
                </HeadDay>
              ))}
            </HeadDays>
          </HeadRow>

          <BarsRow>
            <BarsLeft />
            <CalBar $l={1700} $t={2} $w={71} $c="#ffcc00" />
            <CalBar $l={1700} $t={7} $w={71} $c="#ff9900" />
            <CalBar $l={1700} $t={17} $w={92} $c="#a09c00" />
          </BarsRow>

          {plannerRows.map((r, i) => (
            <Row key={i}>
              {r.group ? (
                <GroupCell>{r.group}</GroupCell>
              ) : (
                <>
                  <Nr $hot={r.hot}>{r.nr}</Nr>
                  <Kurz $hot={r.hot}>{r.name}</Kurz>
                  <MarkCell><Mark /></MarkCell>
                </>
              )}
              <DayStrip group={!!r.group} />
            </Row>
          ))}

          <Row $h={160}>
            <EmptyLeft />
            <DayStrip plain />
          </Row>

          {stats.map((s, i) => (
            <Row key={s}>
              <StatLabel>{s}</StatLabel>
              <DayStrip zero row={i} />
            </Row>
          ))}
        </PlannerMain>
        <VScroll>
          <Chevron dir="up" />
          <Chevron dir="down" />
        </VScroll>
        <TodayLine />
      </Planner>

      <HScroll>
        <Chevron dir="left" c="#666" />
        <HThumb />
        <Chevron dir="right" c="#666" />
      </HScroll>

      <StatusBar>
        <StatusOk>Verbindung zu Feondi erfolgreich hergestellt</StatusOk>
        <span>Verbindung zur Datenbank erfolgreich hergestellt</span>
      </StatusBar>

      <Dialog>
        <DialogTitle>
          <TitleText>Vertrieb über Internetportale</TitleText>
          <WinButton><WinGlyph kind="min" c="#5cc" /></WinButton>
          <WinButton><WinGlyph kind="max" /></WinButton>
          <WinButton $w={45}><WinGlyph kind="close" /></WinButton>
        </DialogTitle>
        <DialogBody>
          <Inner>
            <TabRow $h={23}>
              {topTabs.map(([t, w]) => <Tab key={t} $w={w}>{t}</Tab>)}
            </TabRow>
            <TabRow $h={21}>
              {lowTabs.map(([t, w, on]) => <Tab key={t} $w={w} $on={on}>{t}</Tab>)}
            </TabRow>

            <AccountRow>
              <AccountLabel>Account wählen</AccountLabel>
              <WhiteField><Caret /></WhiteField>
              <Button $w={28} $ml={6}><Form kind="edit" /></Button>
              <Button $w={28} $ml={6}><Form kind="add" /></Button>
              <Button $w={280} $ml={22}><ButtonText>Airbnb-Account mit Fewo-Verwalter verbinden</ButtonText></Button>
              <Button $w={28} $ml={23}><Form kind="del" /></Button>
            </AccountRow>

            <Settings>
              <SetRow>
                <Label $w={247}>E-Mailadresse des Accounts</Label>
                <Field $w={203} $b="#d0d0d0" />
                <Label $w={73} $ml={43}>Airbnb-Host-ID</Label>
                <Field $w={104} $ml={13} $b="#c8c8c8">123456789</Field>
                <Label $w={335} $ml={31} $align="left" $c="#555">Um E-Mailadressen in der Buchung zu erhalten aktivieren Sie dies hier.</Label>
              </SetRow>
              <SetRow $mt={8}>
                <Label $w={247}>Folgende Provision in die Preise einrechnen</Label>
                <Field $w={50} $right>15,00</Field>
                <Check $ml={283} $faint />
                <Label $w={340} $ml={5} $align="left" $c="#888">Alle Inserate dieses Accounts im Modus '24h Buchungsanfrage' betreiben</Label>
              </SetRow>
              <SetRow $mt={6}>
                <Label $w={247}>Stornierungsbedingung</Label>
                <Field $w={203}>flexibel<Caret $c="#bbb" /></Field>
                <Label $w={300} $ml={10} $align="left" $c="#555">siehe auch: https://www.airbnb.de/home/cancellation_policies</Label>
              </SetRow>
              <SetRow $mt={8}>
                <Check $ml={267} $faint><Tick /></Check>
                <Label $w={430} $ml={3} $align="left" $c="#666">Bei direkt über Airbnb gezahlte Buchungen die Zahlung automatisch auf den Gast buchen</Label>
              </SetRow>

              <SettingsBottom>
                <GroupBox>
                  <GroupLegend>Buchungseinstellungen für Fewo-Verwalter. Diese werden nicht zum Portal gesendet! Stellen Sie hier die Bedingungen analog zu den Einstellungen beim Portal ein.</GroupLegend>
                  <SetRow $mt={13}>
                    <Label $w={126} $ml={14} $align="left">Anzahlung und 1. Zahlung</Label>
                    <Label $w={71}>Prozent</Label>
                    <Field $w={81} $right>50,00</Field>
                    <Label $w={52} $ml={25} $align="left">aus Betrag</Label>
                    <Field $w={236} $ml={16}>Objektpreis<Caret $c="#bbb" /></Field>
                  </SetRow>
                  <SetRow $mt={3}>
                    <Label $w={211}>min. Betrag</Label>
                    <Field $w={81} $right>100,00 €</Field>
                    <Field $w={57} $ml={93} $right>1<SpinArrows><UpTick /><Caret $c="#bbb" /></SpinArrows></Field>
                    <Field $w={173} $ml={6}>sofort<Caret $c="#bbb" /></Field>
                    <Check $ml={10} $faint />
                    <Label $w={205} $ml={5} $align="left" $c="#888">Anzahlung ohne Nachkommastellen runden</Label>
                  </SetRow>
                  <SetRow $mt={7}>
                    <Label $w={211}>Restzahlung / 2. Zahlung</Label>
                    <Field $w={58} $right>1<SpinArrows><UpTick /><Caret $c="#bbb" /></SpinArrows></Field>
                    <Field $w={166} $ml={6}>Tag(e) nach Buchung<Caret $c="#bbb" /></Field>
                  </SetRow>
                  <SetRow $mt={5}>
                    <Label $w={211}>Fremdbuchung</Label>
                    <Field $w={410}>Air bnb 15%<EndGroup><Caret $c="#bbb" /><ClearX>✕</ClearX></EndGroup></Field>
                  </SetRow>
                </GroupBox>
                <SaveGroup>
                  <Button $w={90} $off><CancelIcon off /><ButtonText>abbrechen</ButtonText></Button>
                  <Button $w={90} $off><SaveIcon off /><ButtonText>speichern</ButtonText></Button>
                </SaveGroup>
              </SettingsBottom>
            </Settings>

            <Table>
              <TableHead>
                {HEAD.map(([t, align], i) => (
                  <Cell key={t} $w={COLS[i]} $align={align} $last={i === 11}>{t}</Cell>
                ))}
              </TableHead>
              <TableRow $bg="#fff" />
              {objects.map((o, r) => (
                <TableRow key={r} $bg={r === 0 ? '#ccdaf5' : r % 2 ? '#eff6fd' : '#fff'}>
                  <Cell $w={COLS[0]} $align="right">{o[0]}</Cell>
                  <Cell $w={COLS[1]} $align="right">{o[1]}</Cell>
                  <Cell $w={COLS[2]}>{o[2]}</Cell>
                  <Cell $w={COLS[3]}>{o[3]}</Cell>
                  <Cell $w={COLS[4]}>{o[4]}</Cell>
                  <Cell $w={COLS[5]} />
                  <Cell $w={COLS[6]} $align="center"><Check>{o[5] && <Tick />}</Check></Cell>
                  <Cell $w={COLS[7]}>{o[6]}</Cell>
                  <Cell $w={COLS[8]} $align="right">{o[7]}</Cell>
                  <Cell $w={COLS[9]} />
                  {r === 0 ? (
                    <ComboCell $w={COLS[10]}>
                      <ComboArrow><Caret $c="#555" /></ComboArrow>
                      <DropList>
                        <DropItems>
                          {[168, 72, 48, 24, 23, 22, 21].map(v => <DropItem key={v}>{v}</DropItem>)}
                        </DropItems>
                        <DropScroll>
                          <ScrollBtn>▲</ScrollBtn>
                          <ScrollThumb />
                          <ScrollBtn>▼</ScrollBtn>
                        </DropScroll>
                      </DropList>
                    </ComboCell>
                  ) : (
                    <Cell $w={COLS[10]} />
                  )}
                  <Cell $w={COLS[11]} $align="center" $last><Check /></Cell>
                </TableRow>
              ))}
              <TableFill />
              <TableFoot><SumBox>0</SumBox></TableFoot>
            </Table>
          </Inner>
          <DialogFoot>
            <Button $w={90}><CancelIcon /><ButtonText>abbrechen</ButtonText></Button>
            <Button $w={90}><SaveIcon /><ButtonText>speichern</ButtonText></Button>
          </DialogFoot>
        </DialogBody>
      </Dialog>

      <Menu>
        {menuEntries.map((m, i) =>
          m === 'sep' ? (
            <MenuSep key={i} />
          ) : (
            <MenuItem key={i} $on={m.on}>
              <MenuIcon>{m.i}</MenuIcon>
              <MenuText>{m.t}</MenuText>
              {m.sub && <SubArrow />}
            </MenuItem>
          )
        )}
      </Menu>

      <Marks viewBox="0 0 1920 1036" fill="none" stroke={PINK} strokeWidth="5">
        <rect x="71.500" y="18.500" width="85" height="40" />
        <rect x="72" y="159.500" width="277.500" height="25" />
        <rect x="847.500" y="169.500" width="80" height="27" />
        <path d="M1492 501H1642.500V567H1710V704.500H1644.500V761.500H1492Z" strokeLinejoin="round" />
      </Marks>
    </Shell>
  )
}

export default App
